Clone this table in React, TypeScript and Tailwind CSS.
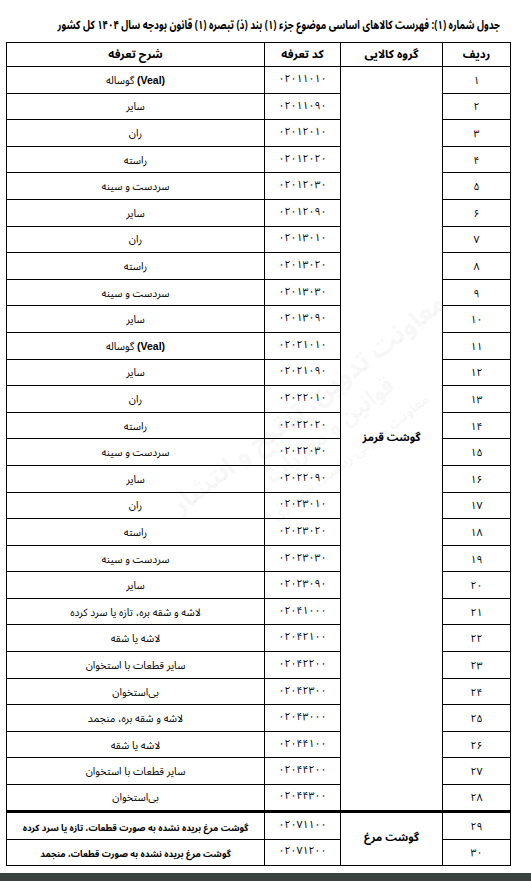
import React from 'react'

const fa = (n: number) => String(n).replace(/\d/g, (d) => '۰۱۲۳۴۵۶۷۸۹'[Number(d)])

const redMeat = [
  ['۰۲۰۱۱۰۱۰', 'veal'],
  ['۰۲۰۱۱۰۹۰', 'سایر'],
  ['۰۲۰۱۲۰۱۰', 'ران'],
  ['۰۲۰۱۲۰۲۰', 'راسته'],
  ['۰۲۰۱۲۰۳۰', 'سردست و سینه'],
  ['۰۲۰۱۲۰۹۰', 'سایر'],
  ['۰۲۰۱۳۰۱۰', 'ران'],
  ['۰۲۰۱۳۰۲۰', 'راسته'],
  ['۰۲۰۱۳۰۳۰', 'سردست و سینه'],
  ['۰۲۰۱۳۰۹۰', 'سایر'],
  ['۰۲۰۲۱۰۱۰', 'veal'],
  ['۰۲۰۲۱۰۹۰', 'سایر'],
  ['۰۲۰۲۲۰۱۰', 'ران'],
  ['۰۲۰۲۲۰۲۰', 'راسته'],
  ['۰۲۰۲۲۰۳۰', 'سردست و سینه'],
  ['۰۲۰۲۲۰۹۰', 'سایر'],
  ['۰۲۰۲۳۰۱۰', 'ران'],
  ['۰۲۰۲۳۰۲۰', 'راسته'],
  ['۰۲۰۲۳۰۳۰', 'سردست و سینه'],
  ['۰۲۰۲۳۰۹۰', 'سایر'],
  ['۰۲۰۴۱۰۰۰', 'لاشه و شقه بره، تازه یا سرد کرده'],
  ['۰۲۰۴۲۱۰۰', 'لاشه یا شقه'],
  ['۰۲۰۴۲۲۰۰', 'سایر قطعات با استخوان'],
  ['۰۲۰۴۲۳۰۰', 'بی‌استخوان'],
  ['۰۲۰۴۳۰۰۰', 'لاشه و شقه بره، منجمد'],
  ['۰۲۰۴۴۱۰۰', 'لاشه یا شقه'],
  ['۰۲۰۴۴۲۰۰', 'سایر قطعات با استخوان'],
  ['۰۲۰۴۴۳۰۰', 'بی‌استخوان'],
]

const poultry = [
  ['۰۲۰۷۱۱۰۰', 'گوشت مرغ بریده نشده به صورت قطعات، تازه یا سرد کرده'],
  ['۰۲۰۷۱۲۰۰', 'گوشت مرغ بریده نشده به صورت قطعات، منجمد'],
]

const Desc = ({ text }: { text: string }) =>
  text === 'veal' ? (
    <span>
      <span className="font-bold" style={{ fontFamily: '"Liberation Sans", sans-serif' }}>(Veal)</span> گوساله
    </span>
  ) : (
    <span>{text}</span>
  )

export default function App() {
  return (
    <div
      dir="rtl"
      className="relative w-[531px] h-[881px] bg-white text-black overflow-hidden"
      style={{ fontFamily: '"Noto Sans Arabic", "Noto Naskh Arabic", "DejaVu Sans", sans-serif' }}
    >
      {/* title squeezed a bit so it fits on one line like the scan */}
      <div className="h-[42px] pt-[18px] pr-[31px] flex justify-start">
        <h1 className="text-[12px] font-bold leading-[16px] whitespace-nowrap origin-right scale-x-[0.79]">
          جدول شماره (۱): فهرست کالاهای اساسی موضوع جزء (۱) بند (ذ) تبصره (۱) قانون بودجه سال ۱۴۰۴ کل کشور
        </h1>
      </div>

      <table className="mr-[20px] w-[504px] border-collapse table-fixed text-[10.5px]">
        <colgroup>
          <col className="w-[68px]" />
          <col className="w-[102px]" />
          <col className="w-[76px]" />
          <col className="w-[258px]" />
        </colgroup>
        <thead>
          <tr className="h-[24px] text-[11.5px] font-bold">
            <th className="border border-black">ردیف</th>
            <th className="border border-black">گروه کالایی</th>
            <th className="border border-black">کد تعرفه</th>
            <th className="border border-black">شرح تعرفه</th>
          </tr>
        </thead>
        <tbody>
          {redMeat.map(([code, text], i) => (
            <tr key={code} className="h-[26.6px]">
              <td className="border border-black text-center align-bottom pb-[3px]">{fa(i + 1)}</td>
              {i === 0 && (
                <td rowSpan={28} className="border border-black text-center align-middle font-bold text-[11px]">
                  گوشت قرمز
                </td>
              )}
              <td className="border border-black text-center align-middle tracking-[0.5px]" dir="ltr">
                {code}
              </td>
              <td className="border border-black text-center align-bottom pb-[3px]">
                <Desc text={text} />
              </td>
            </tr>
          ))}
          {poultry.map(([code, text], i) => (
            <tr key={code} className={i === 0 ? 'h-[28px]' : 'h-[26px]'}>
              <td className={`border border-black text-center align-bottom pb-[3px] ${i === 0 ? 'border-t-[3px]' : ''}`}>
                {fa(29 + i)}
              </td>
              {i === 0 && (
                <td rowSpan={2} className="border border-black border-t-[3px] text-center align-middle font-bold text-[11px]">
                  گوشت مرغ
                </td>
              )}
              <td
                className={`border border-black text-center align-middle tracking-[0.5px] ${i === 0 ? 'border-t-[3px]' : ''}`}
                dir="ltr"
              >
                {code}
              </td>
              <td
                className={`border border-black text-center align-bottom pb-[3px] font-bold text-[9px] whitespace-nowrap ${
                  i === 0 ? 'border-t-[3px]' : ''
                }`}
              >
                {text}
              </td>
            </tr>
          ))}
        </tbody>
      </table>

      {/* watermark */}
      <div className="pointer-events-none absolute left-[150px] top-[380px] w-[360px] -rotate-[38deg] text-center text-[#000]/[0.05] font-bold leading-[34px]">
        <div className="text-[26px]">معاونت تدوین، تنقیح و انتشار</div>
        <div className="text-[22px]">قوانین و مقررات</div>
        <div className="text-[14px]">معاونت حقوقی ریاست جمهوری</div>
      </div>

      <div className="absolute bottom-0 left-0 right-0 h-[8px] bg-[#3a433f]" />
    </div>
  )
}
